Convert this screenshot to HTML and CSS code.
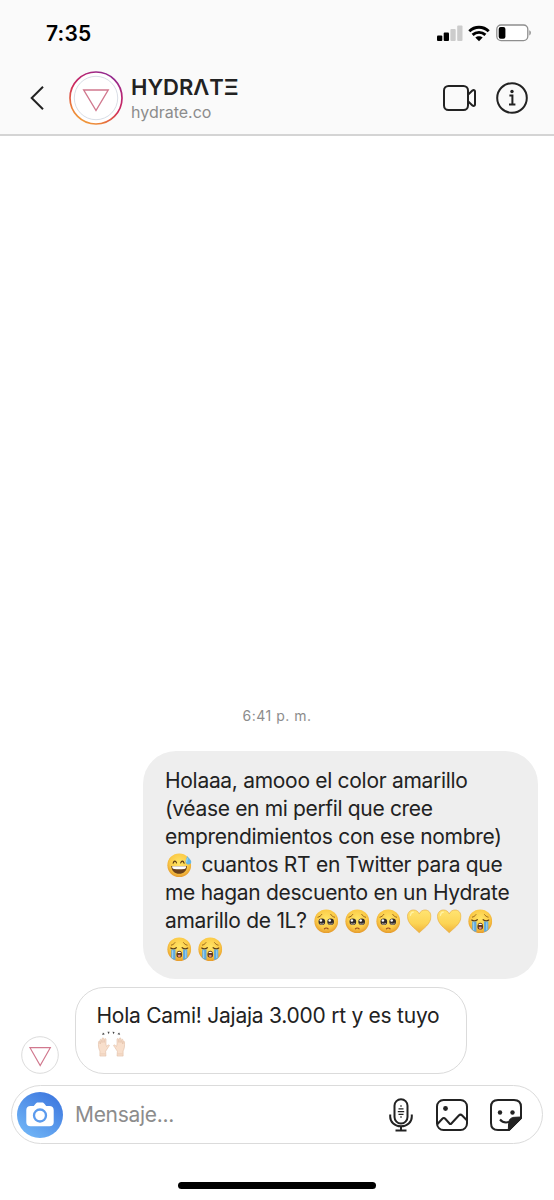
FILE: index.html
```html
<!DOCTYPE html>
<html lang="es">
<head>
<meta charset="utf-8">
<title>HYDRΛTΞ</title>
<link rel="stylesheet" href="styles.css">
</head>
<body>
<svg class="defs" aria-hidden="true">
  <defs>
    <radialGradient id="skin" cx=".5" cy=".4" r=".6">
      <stop offset="0" stop-color="#ffe566"/><stop offset=".65" stop-color="#fbcb48"/><stop offset="1" stop-color="#e59a2c"/>
    </radialGradient>
    <linearGradient id="gold" x1="0" y1="0" x2="0" y2="1">
      <stop offset="0" stop-color="#ffe472"/><stop offset=".6" stop-color="#fcd455"/><stop offset="1" stop-color="#eeb03c"/>
    </linearGradient>
    <linearGradient id="story" x1=".2" y1="1" x2=".75" y2="0">
      <stop offset="0" stop-color="#f3a63c"/><stop offset=".2" stop-color="#e9793a"/><stop offset=".5" stop-color="#cf2a5c"/><stop offset=".78" stop-color="#b32677"/><stop offset="1" stop-color="#8a2a94"/>
    </linearGradient>
    <symbol id="sweat" viewBox="0 0 25 25">
      <circle cx="12.5" cy="12.5" r="12.1" fill="url(#skin)"/>
      <path d="M6.3 10.3c.8-2.6 2.5-2.6 3.4-.2M14 10.1c.8-2.4 2.6-2.4 3.4.2" fill="none" stroke="#5d3b12" stroke-width="1.2" stroke-linecap="round"/>
      <path d="M4.300 13.200h16.200c-.4 5.300-3.700 8-8.100 8s-7.700-2.700-8.100-8z" fill="#69401b"/>
      <path d="M5.200 13.600h14.400c0 2-.8 2.700-2 2.800-3.400.4-7 .4-10.400 0-1.300-.1-2-.8-2-2.800z" fill="#fff"/>
      <path d="M20.600 3c1.800 2.700 4.400 4 4.300 6.300-.1 1.700-1.500 2.600-3.100 2.500-1.900-.1-3.100-1.400-2.800-3.300.2-1.700 1-3.200 1.600-5.500z" fill="#65b7e8"/>
      <path d="M20.800 5.500c-.7 2.200-.8 3-.6 4" fill="none" stroke="#b5e4fa" stroke-width="1"/>
    </symbol>
    <symbol id="plead" viewBox="0 0 25 25">
      <circle cx="12.5" cy="12.5" r="12.1" fill="url(#skin)"/>
      <path d="M4 8.400c1.600-.4 3.200-1.500 3.900-2.800M21 8.400c-1.600-.4-3.200-1.500-3.900-2.800" fill="none" stroke="#96631b" stroke-width="1" stroke-linecap="round"/>
      <circle cx="8" cy="13" r="3.400" fill="#302a2a"/><circle cx="17" cy="13" r="3.400" fill="#302a2a"/>
      <circle cx="7" cy="11.700" r="1.300" fill="#fff"/><circle cx="16" cy="11.700" r="1.300" fill="#fff"/>
      <path d="M6 14.800c1.400 1 3 .8 4-.3M15 14.800c1.400 1 3 .8 4-.3" fill="none" stroke="#d8c8b8" stroke-width=".9"/>
      <path d="M10.600 20.300c.9-1.200 2.900-1.200 3.800 0" fill="none" stroke="#9b4b1e" stroke-width="1.200" stroke-linecap="round"/>
    </symbol>
    <symbol id="heart" viewBox="0 0 25 25">
      <path d="M12.500 24.300C8.500 20 .5 15.300.5 7.600.5 3.700 3.200 1 6.500 1c2.800 0 4.900 1.500 6 4 1.100-2.500 3.200-4 6-4 3.300 0 6 2.700 6 6.600 0 7.700-8 12.400-12 16.700z" fill="url(#gold)" stroke="#e9ae45" stroke-width=".7"/>
      <path d="M3.500 6.500c.3-2 1.500-3.200 3-3.300" fill="none" stroke="#fff2a5" stroke-width="1.200" stroke-linecap="round"/>
    </symbol>
    <symbol id="cry" viewBox="0 0 25 25">
      <circle cx="12.500" cy="12.500" r="12.100" fill="url(#skin)"/>
      <path d="M4.500 8.300c1.200-.2 2.900-1.300 3.600-2.500M20.500 8.300c-1.200-.2-2.900-1.300-3.600-2.500" fill="none" stroke="#96631b" stroke-width="1" stroke-linecap="round"/>
      <path d="M3.800 11.300c1.700 1 4 .9 5.700-.4M21.200 11.300c-1.700 1-4 .9-5.700-.4" fill="none" stroke="#5d3b12" stroke-width="1.300" stroke-linecap="round"/>
      <path d="M4.300 12.500c1.200.5 3 .5 4.300 0v11c-1.700-.4-3.100-1.200-4.300-2.300zM20.700 12.500c-1.200.5-3 .5-4.300 0v11c1.700-.4 3.100-1.200 4.300-2.300z" fill="#5fa9de"/>
      <path d="M5.800 13.500v8M19.200 13.500v8" stroke="#a5d8f5" stroke-width="1"/>
      <path d="M9.600 18c0-2.300 1.200-4 2.900-4s2.900 1.700 2.900 4-1.100 3-2.900 3-2.900-.7-2.900-3z" fill="#613a1c"/>
      <path d="M10.600 16.300c.6-1.700 3.200-1.700 3.800 0z" fill="#fff"/><ellipse cx="12.500" cy="19.200" rx="1.500" ry="1.200" fill="#e58a83"/>
    </symbol>
    <symbol id="hands" viewBox="0 0 30 28">
      <path d="M5 4.200l.8-2.500 2 1.700zM10.600.8l2.300.1-.8 2.500zM16 .9l2.300.1-1 2.500zM23.200 1.500l-1.800 2 3 .6z" fill="#454545"/>
      <path id="palm" d="M2.500 27v-5.500C1 19 .8 15.800 1 12c.1-1.500 1.500-1.400 1.600 0l.3 2-.3-4c0-1.400 1.500-1.400 1.700 0l.5 2.500L4.900 8.400c0-1.400 1.700-1.400 1.800 0l.3 4 .5-3.300c.2-1.300 1.600-1.200 1.600.1L9 14l.6 2.600c1-.9 1.700-1.700 2.600-1.600 1 .2.300 1.100-.2 1.800L8.700 21.800 9 27z" fill="#f8dfcc" stroke="#dfb89f" stroke-width=".6"/>
      <use href="#palm" transform="matrix(-1 0 0 1 30 0)"/>
      <path d="M3.300 24.700h5M21.700 24.700h5" stroke="#e8c5ae" stroke-width=".7"/>
    </symbol>
  </defs>
</svg>
<main class="screen">
  <div class="status">
    <span class="clock">7:35</span>
    <svg class="signal" viewBox="0 0 26 18">
      <rect x="0" y="11.500" width="5.300" height="5.500" rx="1"/><rect x="6.700" y="8.500" width="5.300" height="8.500" rx="1"/>
      <rect class="dim" x="13.400" y="5" width="5.300" height="12" rx="1"/><rect class="dim" x="20.200" y="1.500" width="5.300" height="15.500" rx="1"/>
    </svg>
    <svg class="wifi" viewBox="0 0 22 17">
      <path d="M1.300 6.200c5.500-5.300 13.900-5.300 19.400 0M4.600 9.900c3.700-3.400 9.100-3.400 12.800 0" fill="none" stroke="#000" stroke-width="2.900"/>
      <path d="M7.300 12.600c2.100-1.800 5.300-1.800 7.400 0L11 16.300z"/>
    </svg>
    <svg class="battery" viewBox="0 0 36 18">
      <rect x=".8" y="1" width="31" height="15.600" rx="4.300" fill="#fff" stroke="#8e8e8e" stroke-width="1.300"/>
      <rect x="2.700" y="3" width="6.700" height="11.700" rx="2"/><path d="M33.300 6.300c2.100.9 2.100 4.200 0 5.100z" fill="#8e8e8e"/>
    </svg>
  </div>
  <header class="header">
    <svg class="back" viewBox="0 0 14 24"><path d="M13 .8L1.700 12 13 23.200" fill="none" stroke="#222" stroke-width="2"/></svg>
    <svg class="avatar" viewBox="0 0 54 54">
      <circle cx="27" cy="27" r="26" fill="#fff" stroke="url(#story)" stroke-width="1.700"/>
      <circle cx="27" cy="27" r="21.700" fill="none" stroke="#d9dee6"/>
      <path d="M14.700 19h24.500L27 39.500z" fill="none" stroke="#d1788e" stroke-width="1.400"/>
    </svg>
    <div class="who">
      <div class="name">HYDRΛTΞ</div>
      <div class="handle">hydrate.co</div>
    </div>
    <svg class="video" viewBox="0 0 34 26">
      <rect x="1" y="1" width="24" height="24" rx="4.500"/><path d="M25 9.800l4.400-4.200c1.200-.9 2.600-.5 2.600 1v12.800c0 1.500-1.400 1.900-2.600 1L25 16.200"/>
    </svg>
    <svg class="info" viewBox="0 0 32 32">
      <circle cx="16" cy="16" r="14.800"/><path d="M13.400 13.600h3v8.800M13 22.400h6.400"/><circle cx="16" cy="9.500" r="1.700" fill="#222" stroke="none"/>
    </svg>
  </header>
  <section class="thread">
    <div class="time">6:41 p. m.</div>
    <div class="bubble sent">
      <div class="line">Holaaa, amooo el color amarillo</div>
      <div class="line tight">(véase en mi perfil que cree</div>
      <div class="line">emprendimientos con ese nombre)</div>
      <div class="line"><svg class="emoji"><use href="#sweat"/></svg> cuantos RT en Twitter para que</div>
      <div class="line">me hagan descuento en un Hydrate</div>
      <div class="line">amarillo de 1L? <svg class="emoji"><use href="#plead"/></svg><svg class="emoji"><use href="#plead"/></svg><svg class="emoji"><use href="#plead"/></svg><svg class="emoji"><use href="#heart"/></svg><svg class="emoji"><use href="#heart"/></svg><svg class="emoji"><use href="#cry"/></svg></div>
      <div class="line"><svg class="emoji"><use href="#cry"/></svg><svg class="emoji"><use href="#cry"/></svg></div>
    </div>
    <div class="reply">
      <svg class="mini" viewBox="0 0 38 38"><circle cx="19" cy="19" r="18.300" fill="#fff" stroke="#dcdcdc"/><path d="M9 11.700h20.300L19.200 29.500z" fill="none" stroke="#d1788e" stroke-width="1.200"/></svg>
      <div class="bubble received">
        <div class="line">Hola Cami! Jajaja 3.000 rt y es tuyo</div>
        <div class="line"><svg class="hands"><use href="#hands"/></svg></div>
      </div>
    </div>
  </section>
  <footer class="composer">
    <div class="camera">
      <svg viewBox="0 0 28 25"><path d="M4.500 4h3.300l1.800-2.300C10.300.8 11 .4 12 .4h4c1 0 1.700.4 2.400 1.300L20.200 4h3.300C26 4 27.700 5.500 27.700 8v12.300c0 2.500-1.700 4-4.200 4h-19c-2.500 0-4.200-1.500-4.200-4V8C.3 5.500 2 4 4.500 4z" fill="#fff"/><circle cx="14" cy="13.500" r="6" fill="none" stroke="#5b9bee" stroke-width="2.300"/></svg>
    </div>
    <span class="placeholder">Mensaje...</span>
    <svg class="tool mic" viewBox="0 0 24 34">
      <rect x="5.500" y="1.200" width="13" height="24.300" rx="6.500"/><path d="M1.200 16.500v2.200c0 5.300 4.500 9.600 10.800 9.600s10.800-4.300 10.800-9.600v-2.200M12 28.300v4M6.500 32.500h11"/>
      <path class="thin" d="M11 8h2M9.500 10.900h5M8.800 13.600h6.400M9.500 16.300h5M11 19h2"/>
    </svg>
    <svg class="tool photo" viewBox="0 0 32 32">
      <rect x="1" y="1" width="30" height="30" rx="6.500"/><circle cx="9.500" cy="9.500" r="2.400" fill="#222" stroke="none"/>
      <path d="M1.500 25l4.600-5c1.200-1.300 2.200-1.300 3.400 0l4 4.500c.6.700 1.300.7 1.900 0l7.400-8c1.200-1.200 2.200-1.200 3.400 0l4.600 4.800"/>
    </svg>
    <svg class="tool sticker" viewBox="0 0 32 32">
      <path d="M19 31H8c-4.500 0-7-2.500-7-7V8c0-4.500 2.500-7 7-7h16c4.500 0 7 2.500 7 7v11z"/>
      <path d="M18.300 31l.3-6.500c.2-4 2.400-6.200 6.200-6.200L31 18v2L20 31z" fill="#222" stroke-width="1"/>
      <path d="M10 20.500c2.300 2.800 5.500 3.500 9 2.500"/><circle cx="10" cy="13.500" r="2.200" fill="#222" stroke="none"/><circle cx="22.500" cy="13.500" r="2.200" fill="#222" stroke="none"/>
    </svg>
  </footer>
  <div class="home"></div>
</main>
</body>
</html>
```
FILE: styles.css
```css
* { box-sizing: border-box; }
body { margin: 0; background: #fff; color: #222; font-family: Inter, "Liberation Sans", sans-serif; }
svg { display: block; flex: none; overflow: visible; }
.defs { position: absolute; width: 0; height: 0; }
.screen { width: 554px; height: 1200px; display: flex; flex-direction: column; overflow: hidden; }
.status { height: 61px; background: #fafafa; display: flex; align-items: flex-start; padding: 24px 22px 0 46px; flex: none; }
.clock { font-size: 21px; font-weight: 600; line-height: 20px; color: #000; margin-right: auto; letter-spacing: .2px; }
.signal { width: 26px; height: 18px; margin-right: 5px; }
.dim { fill: #ccc; }
.wifi { width: 22px; height: 17px; margin: 1px 6px 0 0; }
.battery { width: 36px; height: 18px; }
.header { height: 75px; background: #fafafa; border-bottom: 2px solid #d4d4d4; display: flex; align-items: center; padding: 0 26px 0 30px; flex: none; }
.back { width: 14px; height: 24px; margin-right: 25px; }
.avatar { width: 54px; height: 54px; margin-right: 8px; }
.who { flex: 1; padding-top: 4px; }
.name { font-size: 22px; font-weight: 600; line-height: 26px; white-space: nowrap; }
.handle { font-size: 16px; line-height: 25px; color: #8c8c8c; }
.video { width: 34px; height: 26px; margin-right: 19px; }
.info { width: 32px; height: 32px; }
.video, .info { fill: none; stroke: #222; stroke-width: 2; }
.thread { flex: 1; display: flex; flex-direction: column; justify-content: flex-end; }
.time { align-self: center; font-size: 14px; line-height: 20px; letter-spacing: .5px; color: #8c8c8c; margin-bottom: 25px; }
.bubble { font-size: 21px; line-height: 28.1px; letter-spacing: -.3px; white-space: nowrap; }
.line { height: 28.1px; }
.tight { letter-spacing: -.34px; }
.sent { align-self: flex-end; width: 395px; height: 228px; margin-right: 16px; padding: 16px 0 0 22px; border-radius: 33px; background: #eee; }
.emoji { display: inline-block; width: 24.5px; height: 24.5px; margin: 0 4.3px 0 2px; vertical-align: -5px; }
.reply { display: flex; align-items: flex-end; margin: 8px 0 11px 21px; }
.mini { width: 38px; height: 38px; margin-right: 16px; }
.received { width: 392px; height: 87px; border: 1.5px solid #dbdbdb; border-radius: 29px; padding: 14px 0 0 20.5px; letter-spacing: -.25px; }
.hands { display: inline-block; width: 29px; height: 26px; vertical-align: -6px; }
.composer { height: 59px; margin: 0 11px; padding: 0 20px 0 5px; border: 1px solid #dbdbdb; border-radius: 30px; display: flex; align-items: center; flex: none; }
.camera { width: 46px; height: 46px; border-radius: 50%; background: linear-gradient(35deg, #72b7f7 8%, #3e78df 90%); display: flex; align-items: center; justify-content: center; }
.camera svg { width: 28px; height: 25px; }
.placeholder { flex: 1; margin-left: 12px; font-size: 21px; letter-spacing: -.3px; color: #8c8c8c; }
.tool { fill: none; stroke: #222; stroke-width: 2; height: 32px; width: 32px; }
.mic { width: 24px; height: 34px; margin-right: 23px; }
.photo { margin-right: 22px; }
.thin { stroke-width: 1.2; }
.home { flex: none; width: 198px; height: 7px; border-radius: 4px; background: #000; margin: 38px 0 11px 178px; }
```
